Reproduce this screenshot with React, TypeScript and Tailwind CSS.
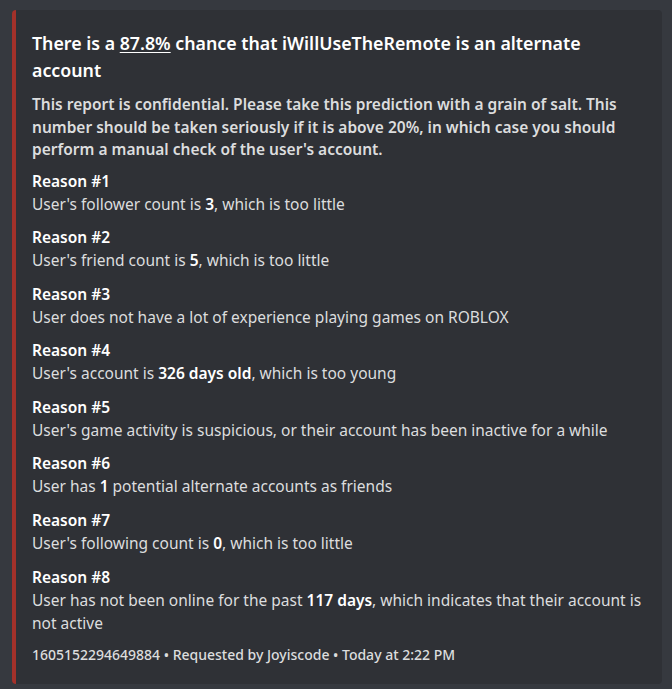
const reasons: { n: number; body: React.ReactNode }[] = [
  { n: 1, body: <>User's follower count is <b>3</b>, which is too little</> },
  { n: 2, body: <>User's friend count is <b>5</b>, which is too little</> },
  { n: 3, body: <>User does not have a lot of experience playing games on ROBLOX</> },
  { n: 4, body: <>User's account is <b>326 days old</b>, which is too young</> },
  { n: 5, body: <>User's game activity is suspicious, or their account has been inactive for a while</> },
  { n: 6, body: <>User has <b>1</b> potential alternate accounts as friends</> },
  { n: 7, body: <>User's following count is <b>0</b>, which is too little</> },
  { n: 8, body: <>User has not been online for the past <b>117 days</b>, which indicates that their account is not active</> },
];

export default function App() {
  return (
    <div
      className="min-h-[689px] w-[672px] bg-[#36393f] pt-[10px] pl-[12px] pr-[10px]"
      style={{ fontFamily: '"Noto Sans", "Open Sans", sans-serif' }}
    >
      <div className="flex h-[674px] rounded-[4px] bg-[#2f3136] overflow-hidden">
        <div className="w-[4px] shrink-0 bg-[#a3312a]" />
        <div className="flex flex-col pl-[16px] pr-[14px] pt-[20px]">
          <div className="text-[17.8px] leading-[27px] font-semibold text-white">
            There is a <span className="underline underline-offset-2">87.8%</span> chance that iWillUseTheRemote is an alternate account
          </div>
          <div className="mt-[9px] text-[15.5px] leading-[22.5px] font-semibold text-[#dcddde]">
            This report is confidential. Please take this prediction with a grain of salt. This number should be taken seriously if it is above 20%, in which case you should perform a manual check of the user's account.
          </div>
          <div className="mt-[9px] flex flex-col gap-[10.6px]">
            {reasons.map((r) => (
              <div key={r.n} className="text-[15.5px] leading-[23px]">
                <div className="font-semibold text-white">Reason #{r.n}</div>
                <div className="text-[#dcddde] [&_b]:font-semibold [&_b]:text-white">{r.body}</div>
              </div>
            ))}
          </div>
          <div className="mt-[10px] text-[14px] leading-[20px] font-medium text-[#dcddde]">
            1605152294649884 • Requested by Joyiscode • Today at 2:22 PM
          </div>
        </div>
      </div>
    </div>
  );
}
